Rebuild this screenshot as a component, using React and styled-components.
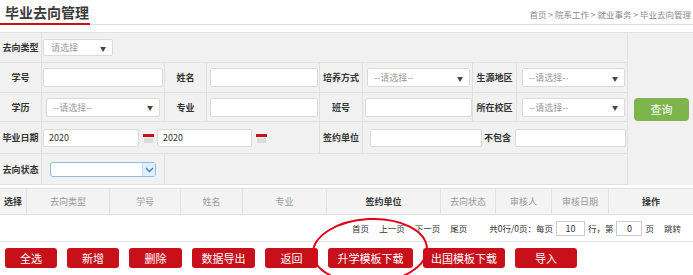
import styled, { createGlobalStyle } from "styled-components"

const GlobalStyle = createGlobalStyle`
  html, body {
    margin: 0;
    padding: 0;
    background: #fff;
  }
  body {
    font-family: "Noto Sans CJK SC", "Noto Sans", sans-serif;
    color: #333;
  }
`;

export default function App() {
  return (
    <PageSC>
      <GlobalStyle />

      <HeaderSC>
        <TitleSC>毕业去向管理</TitleSC>
        <CrumbSC>首页 &gt; 院系工作 &gt; 就业事务 &gt; 毕业去向管理</CrumbSC>
      </HeaderSC>

      <FormGridSC>
        {/* row 1 */}
        <LabelCell>去向类型</LabelCell>
        <FieldCell $span={7} $pl={1}>
          <SelectBox $w={70} $h={17} $dark>请选择</SelectBox>
        </FieldCell>
        <SideCell>
          <QueryBtn>查询</QueryBtn>
        </SideCell>

        {/* row 2 */}
        <LabelCell>学号</LabelCell>
        <FieldCell $pl={1}><InputBox $w={120} /></FieldCell>
        <LabelCell>姓名</LabelCell>
        <FieldCell $pl={3}><InputBox $w={108} /></FieldCell>
        <LabelCell>培养方式</LabelCell>
        <FieldCell $pl={4}><SelectBox $w={103}>--请选择--</SelectBox></FieldCell>
        <LabelCell>生源地区</LabelCell>
        <FieldCell $pl={5}><SelectBox $w={103}>--请选择--</SelectBox></FieldCell>

        {/* row 3 */}
        <LabelCell>学历</LabelCell>
        <FieldCell $pl={4}><SelectBox $w={114}>--请选择--</SelectBox></FieldCell>
        <LabelCell>专业</LabelCell>
        <FieldCell $pl={3}><InputBox $w={108} /></FieldCell>
        <LabelCell>班号</LabelCell>
        <FieldCell $pl={2}><InputBox $w={107} /></FieldCell>
        <LabelCell>所在校区</LabelCell>
        <FieldCell $pl={5}><SelectBox $w={103}>--请选择--</SelectBox></FieldCell>

        {/* row 4 */}
        <LabelCell>毕业日期</LabelCell>
        <FieldCell $span={3} $pl={1}>
          <InputBox $w={96} $h={18}>2020</InputBox>
          <DateIcon />
          <InputBox $w={95} $h={18}>2020</InputBox>
          <DateIcon />
        </FieldCell>
        <LabelCell>签约单位</LabelCell>
        <FieldCell $span={3} $pl={7}>
          <InputBox $w={112} $h={18} />
          <InlineLabel>不包含</InlineLabel>
          <InputBox $w={111} $h={18} />
        </FieldCell>

        {/* row 5 */}
        <LabelCell>去向状态</LabelCell>
        <FieldCell $pl={8}>
          <BlueSelect>
            <BlueArrow>
              <svg width="9" height="6" viewBox="0 0 9 6">
                <path d="M1 1 L4.5 4.5 L8 1" fill="none" stroke="#3a7fd0" strokeWidth="1.4" />
              </svg>
            </BlueArrow>
          </BlueSelect>
        </FieldCell>
        <FieldCell $span={6} />
      </FormGridSC>

      <TableHeadSC>
        <HeadCell $w={27} $strong>选择</HeadCell>
        <HeadCell $w={83}>去向类型</HeadCell>
        <HeadCell $w={71}>学号</HeadCell>
        <HeadCell $w={62}>姓名</HeadCell>
        <HeadCell $w={84}>专业</HeadCell>
        <HeadCell $w={114} $strong>签约单位</HeadCell>
        <HeadCell $w={55}>去向状态</HeadCell>
        <HeadCell $w={56}>审核人</HeadCell>
        <HeadCell $w={57}>审核日期</HeadCell>
        <HeadCell $w={84} $strong $last>操作</HeadCell>
      </TableHeadSC>

      <PagerSC>
        <PagerLink>首页</PagerLink>
        <PagerLink>上一页</PagerLink>
        <PagerLink>下一页</PagerLink>
        <PagerLink $gap={22}>尾页</PagerLink>
        <span>共0行/0页：每页</span>
        <PagerInput>10</PagerInput>
        <span>行，第</span>
        <PagerInput $w={26}>0</PagerInput>
        <PagerLink>页</PagerLink>
        <span>跳转</span>
      </PagerSC>

      <ButtonRowSC>
        <RedBtn $w={52}>全选</RedBtn>
        <RedBtn $w={52}>新增</RedBtn>
        <RedBtn $w={53}>删除</RedBtn>
        <RedBtn $w={63}>数据导出</RedBtn>
        <RedBtn $w={53}>返回</RedBtn>
        <RedBtn $w={85}>升学模板下载</RedBtn>
        <RedBtn $w={82}>出国模板下载</RedBtn>
        <RedBtn $w={62}>导入</RedBtn>
      </ButtonRowSC>

      <MarkSC width="130" height="75" viewBox="0 0 130 75">
        <ellipse cx="62" cy="38" rx="57" ry="32" fill="none" stroke="#e2001a" strokeWidth="2" transform="rotate(-3 62 38)" />
      </MarkSC>
    </PageSC>
  )
}

function DateIcon() {
  return (
    <DateIconSC width="12" height="12" viewBox="0 0 12 12">
      <rect x="0" y="2" width="11" height="3" fill="#c8101a" />
      <rect x="1" y="6" width="9" height="5" fill="#dcdcdc" />
    </DateIconSC>
  )
}

const PageSC = styled.div`
  position: relative;
  width: 693px;
  height: 275px;
  overflow: hidden;
  background: #fff;
`;

const HeaderSC = styled.div`
  display: flex;
  justify-content: space-between;
  align-items: flex-end;
  height: 24px;
  border-bottom: 1px solid #dcdcdc;
  margin-bottom: 7px;
`;

const TitleSC = styled.div`
  width: 85px;
  padding-left: 5px;
  font-size: 14px;
  font-weight: bold;
  line-height: 22px;
  color: #3a3a3a;
  border-bottom: 2px solid #c8101a;
  margin-bottom: -1px;
  white-space: nowrap;
`;

const CrumbSC = styled.div`
  align-self: center;
  margin-top: 4px;
  margin-right: 2px;
  font-size: 8.5px;
  color: #8a8a8a;
  white-space: nowrap;
`;

const FormGridSC = styled.div`
  display: grid;
  grid-template-columns: 42px 123px 42px 113px 43px 110px 44px 111px 65px;
  grid-template-rows: 30px 30px 29px 32px 31px;
  background: #f1f1f1;
  border-top: 1px solid #e0e0e0;
`;

const LabelCell = styled.div`
  display: flex;
  align-items: center;
  justify-content: center;
  font-size: 9px;
  font-weight: bold;
  color: #333;
  white-space: nowrap;
  border-right: 1px solid #e0e0e0;
  border-bottom: 1px solid #e0e0e0;
`;

const FieldCell = styled.div`
  grid-column: span ${props => props.$span || 1};
  display: flex;
  align-items: center;
  padding-left: ${props => props.$pl || 0}px;
  border-right: 1px solid #e0e0e0;
  border-bottom: 1px solid #e0e0e0;
`;

const SideCell = styled.div`
  grid-column: 9;
  grid-row: 1 / span 5;
  display: flex;
  align-items: center;
  justify-content: center;
  padding-left: 2px;
`;

const QueryBtn = styled.div`
  width: 55px;
  height: 23px;
  display: flex;
  align-items: center;
  justify-content: center;
  background: #7db54c;
  border-radius: 4px;
  color: #fff;
  font-size: 11px;
`;

const InputBox = styled.div`
  box-sizing: border-box;
  width: ${props => props.$w}px;
  height: ${props => props.$h || 19}px;
  background: #fff;
  border: 1px solid #dadada;
  border-radius: 2px;
  font-size: 9px;
  color: #333;
  display: flex;
  align-items: center;
  padding-left: 5px;
  & + svg {
    margin-left: 4px;
    margin-right: 2px;
  }
`;

const SelectBox = styled.div`
  box-sizing: border-box;
  position: relative;
  width: ${props => props.$w}px;
  height: ${props => props.$h || 19}px;
  background: #fff;
  border: 1px solid #dadada;
  border-radius: 2px;
  font-size: 9px;
  color: #999;
  display: flex;
  align-items: center;
  padding-left: ${props => props.$dark ? 7 : 6}px;
  &::after {
    content: "▼";
    position: absolute;
    right: 6px;
    top: 50%;
    transform: translateY(-50%);
    font-size: 6px;
    color: #444;
  }
`;

const BlueSelect = styled.div`
  box-sizing: border-box;
  display: flex;
  justify-content: flex-end;
  width: 106px;
  height: 15px;
  background: #fff;
  border: 1px solid #8fbbe8;
  border-radius: 3px;
  margin-top: 1px;
`;

const BlueArrow = styled.div`
  width: 12px;
  display: flex;
  align-items: center;
  justify-content: center;
  background: #e3eefb;
  border-left: 1px solid #c6dbf3;
`;

const DateIconSC = styled.svg`
  flex-shrink: 0;
`;

const InlineLabel = styled.span`
  font-size: 9px;
  font-weight: bold;
  margin: 0 4px 0 2px;
  white-space: nowrap;
`;

const TableHeadSC = styled.div`
  display: flex;
  height: 25px;
  margin-top: 3px;
  background: #f3f3f3;
  border-top: 1px solid #e2e2e2;
  border-bottom: 1px solid #e2e2e2;
`;

const HeadCell = styled.div`
  box-sizing: border-box;
  width: ${props => props.$w}px;
  display: flex;
  align-items: center;
  justify-content: center;
  font-size: 9px;
  font-weight: ${props => props.$strong ? 'bold' : 'normal'};
  color: ${props => props.$strong ? '#333' : '#999'};
  border-right: ${props => props.$last ? 'none' : '1px solid #e2e2e2'};
  white-space: nowrap;
`;

const PagerSC = styled.div`
  display: flex;
  justify-content: flex-end;
  align-items: center;
  height: 26px;
  padding-right: 12px;
  border-bottom: 1px solid #e2e2e2;
  font-size: 8.5px;
  color: #333;
  white-space: nowrap;
`;

const PagerLink = styled.span`
  margin-right: ${props => props.$gap || 10}px;
`;

const PagerInput = styled.div`
  box-sizing: border-box;
  width: ${props => props.$w || 29}px;
  height: 15px;
  margin: 0 3px;
  border: 1px solid #ccc;
  display: flex;
  align-items: center;
  justify-content: center;
  font-size: 9px;
`;

const ButtonRowSC = styled.div`
  display: flex;
  gap: 10px;
  padding: 6px 0 0 5px;
`;

const RedBtn = styled.div`
  width: ${props => props.$w}px;
  height: 20px;
  display: flex;
  align-items: center;
  justify-content: center;
  background: #c8101a;
  border-radius: 3px;
  color: #fff;
  font-size: 11px;
  white-space: nowrap;
`;

const MarkSC = styled.svg`
  position: absolute;
  left: 308px;
  top: 213px;
  pointer-events: none;
`;
